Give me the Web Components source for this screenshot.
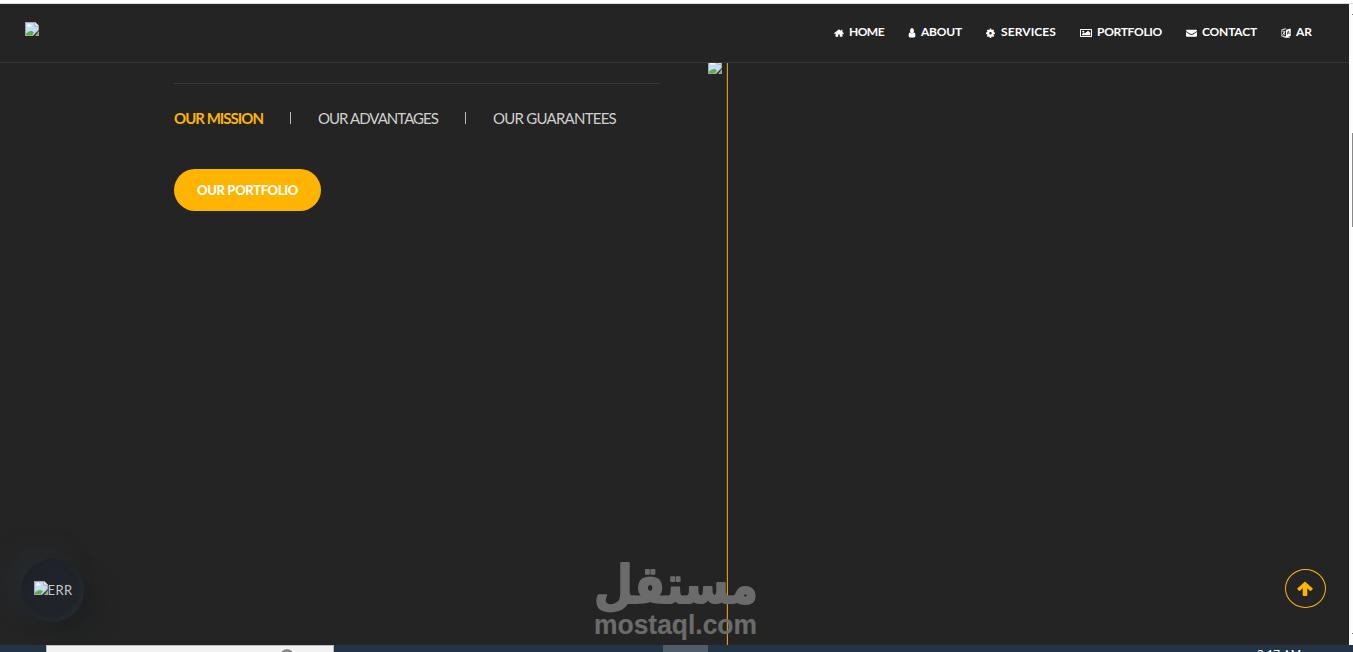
<!DOCTYPE html>
<html lang="en">
<head>
<meta charset="utf-8">
<title>Portfolio</title>
<style>
  html, body { margin: 0; height: 100%; overflow: hidden; background: #fdfdfd; }
</style>
</head>
<body>
<app-shell></app-shell>

<script>
const ICONS = {
  home: '<path d="M8 2.200 0 9l1 1.400 1.500-1V15h4.200v-4h2.600v4h4.200V9.400l1.500 1L16 9l-2.500-2.100V2.800h-2v2.400z"/>',
  user: '<path d="M8 0a4 4.400 0 0 1 4 4.400A4 4.400 0 0 1 8 8.800 4 4.400 0 0 1 4 4.400 4 4.400 0 0 1 8 0z"/><path d="M4.300 7.200C2 7.700 1.200 10 1.200 13q0 3 3 3h7.600q3 0 3-3c0-3-.8-5.300-3.100-5.800C9.500 9.800 6.500 9.800 4.300 7.200z"/>',
  cog: '<path fill-rule="evenodd" d="M6.800 1h2.400l.4 2 1.300.6 1.800-1.100 1.800 1.800-1.100 1.800.6 1.300 2 .4v2.400l-2 .4-.6 1.300 1.100 1.800-1.800 1.800-1.800-1.100-1.300.6-.4 2H6.800l-.4-2-1.300-.6-1.800 1.100-1.800-1.800 1.100-1.800L2 10.600l-2-.4V7.800l2-.4.6-1.300-1.100-1.800 1.800-1.800 1.800 1.100L6.400 3zM8 6.800a2.200 2.200 0 1 0 0 4.400 2.200 2.200 0 0 0 0-4.400z"/>',
  image: '<path fill-rule="evenodd" d="M1.200 2h15.600Q18 2 18 3.200v11.600q0 1.200-1.200 1.200H1.200Q0 16 0 14.800V3.200Q0 2 1.200 2zm.3 1.500v11h15v-11z"/><circle cx="4.800" cy="6.500" r="1.700"/><path d="M3 13v-2l3-3 1.500 1.500L12 5l3.500 3.500V13z"/>',
  mail: '<path d="M0 4.200Q0 3 1.400 3h13.200Q16 3 16 4.200c0 1-1 1.800-1.800 2.400L9.500 9.900q-1.500 1-3 0L1.800 6.600C1 6 0 5.200 0 4.200z"/><path d="M0 7l5.600 4q2.400 1.600 4.800 0L16 7v6.600q0 1.400-1.400 1.400H1.400Q0 15 0 13.600z"/>',
  language: '<path fill-rule="evenodd" d="M8 3 15.500 1v12.500L8 16zM11 5l-1.700 6.300 1-.3.400-1.400 1.800-.6.5 1.100 1-.3L12 4.700zm.5 1.500.7 1.500-1.100.4z"/><path d="M.5 2.500 7.500 0v2L1.500 4.500v8L8 14.200 14 15.500v1L7.500 17 .5 14z" opacity=".8"/><path d="M2 6l5-1v1L5.500 9 7 11l-1 .7-1.400-1.700L2.500 12 2 11l1.800-2L2.700 7.500l1-.4.8 1 .8-1.600L2 7z"/>',
  up: '<path d="M8 .6 16 8.300l-1.900 2.100q-.6.5-1.200 0L10.300 7.800V15q0 1-1 1H6.700q-1 0-1-1V7.800l-2.600 2.600q-.6.5-1.200 0L0 8.300z"/>'
};

// sets letter spacing so that the label takes exactly the given width
class FitLabel extends HTMLElement {
  constructor() {
    super();
    this.attachShadow({ mode: 'open' });
    this.shadowRoot.innerHTML = `
      <style>
        :host { display: block; white-space: nowrap; }
        span { display: inline-block; }
      </style>
      <span><slot></slot></span>
    `;
  }

  connectedCallback() {
    const width = Number(this.getAttribute('width'));
    const span = this.shadowRoot.querySelector('span');
    this.style.width = width + 'px';
    span.style.letterSpacing = '0';
    const count = this.textContent.length;
    const gap = (width - span.getBoundingClientRect().width) / count;
    span.style.letterSpacing = gap + 'px';
  }
}

class UiIcon extends HTMLElement {
  connectedCallback() {
    if (!this.shadowRoot) this.attachShadow({ mode: 'open' });
    const name = this.getAttribute('name');
    const box = name === 'image' ? '0 0 18 18' : '0 0 16 17';
    this.shadowRoot.innerHTML = `
      <style>
        :host { display: block; width: 10px; height: 10px; }
        svg { display: block; width: 100%; height: 100%; fill: currentColor; }
      </style>
      <svg viewBox="${box}" preserveAspectRatio="none">${ICONS[name]}</svg>
    `;
  }
}

class BrokenImage extends HTMLElement {
  constructor() {
    super();
    this.attachShadow({ mode: 'open' });
    this.shadowRoot.innerHTML = `
      <style>
        :host { display: block; width: 14px; height: 14px; flex: none; }
        svg { display: block; }
      </style>
      <svg width="14" height="14" viewBox="0 0 14 14">
        <path d="M0 0h10l4 4v4L8 14H0z" fill="#a5a5a5"/>
        <path d="M1 1h8.500v3.500H13V8l-5 5H1z" fill="#c4daf8"/>
        <path d="M10 0v4h4z" fill="#f2f2f2" stroke="#aaa" stroke-width=".6"/>
        <path d="M2 4.500V3.200h1.200V2H5v1h1.500v1.500z" fill="#fff"/>
        <path d="M1 13v-1.500Q3.500 8.500 7 9l2 1.500L7 13z" fill="#58b043"/>
        <path d="M14 9v5h-4z" fill="#a5a5a5"/>
        <path d="M13 10.500V13h-2z" fill="#58b043"/>
      </svg>
    `;
  }
}

class NavItem extends HTMLElement {
  connectedCallback() {
    if (!this.shadowRoot) this.attachShadow({ mode: 'open' });
    this.shadowRoot.innerHTML = `
      <style>
        :host { display: flex; align-items: center; height: 16px; color: #fff; font-weight: 700; font-size: 12px; line-height: 16px; }
        ui-icon { width: ${this.getAttribute('icon-width')}px; margin: 2px ${this.getAttribute('gap') || 5}px 0 0; }
      </style>
      <ui-icon name="${this.getAttribute('icon')}"></ui-icon>
      <fit-label width="${this.getAttribute('width')}">${this.getAttribute('label')}</fit-label>
    `;
  }
}

class SiteHeader extends HTMLElement {
  constructor() {
    super();
    this.attachShadow({ mode: 'open' });
    this.shadowRoot.innerHTML = `
      <style>
        :host { display: flex; justify-content: space-between; align-items: flex-start; box-sizing: border-box;
          height: 59px; padding: 18px 37px 0 25px; border-bottom: 1px solid #363636; }
        nav { display: flex; gap: 24px; margin-top: 2px; }
      </style>
      <broken-image></broken-image>
      <nav>
        <nav-item icon="home" icon-width="10" label="HOME" width="35"></nav-item>
        <nav-item icon="user" icon-width="8" label="ABOUT" width="41"></nav-item>
        <nav-item icon="cog" icon-width="9" gap="6" label="SERVICES" width="55"></nav-item>
        <nav-item icon="image" icon-width="12" label="PORTFOLIO" width="65"></nav-item>
        <nav-item icon="mail" icon-width="11" label="CONTACT" width="55"></nav-item>
        <nav-item icon="language" icon-width="10" label="AR" width="16"></nav-item>
      </nav>
    `;
  }
}

class MissionPanel extends HTMLElement {
  constructor() {
    super();
    this.attachShadow({ mode: 'open' });
    this.shadowRoot.innerHTML = `
      <style>
        :host { display: block; box-sizing: border-box; width: 660px; padding: 20px 0 0 174px; }
        .tabs { display: flex; align-items: center; border-top: 1px solid #3a3a3a; height: 67px;
          color: #d0d0d0; font-size: 15px; line-height: 20px; }
        .active { color: #ffb400; font-weight: 700; }
        i { width: 1px; height: 12px; background: #bbb; margin: 0 27px; }
        button { display: flex; justify-content: center; align-items: center; width: 147px; height: 42px;
          margin: 18px 0 0; padding: 0 0 1px; border: 0; border-radius: 21px; background: #ffb400;
          color: #fff; font-weight: 900; font-size: 13px; font-family: inherit; }
      </style>
      <div class="tabs">
        <fit-label class="active" width="89">OUR MISSION</fit-label><i></i>
        <fit-label width="120">OUR ADVANTAGES</fit-label><i></i>
        <fit-label width="123">OUR GUARANTEES</fit-label>
      </div>
      <button><fit-label width="101">OUR PORTFOLIO</fit-label></button>
    `;
  }
}

class ChatBubble extends HTMLElement {
  constructor() {
    super();
    this.attachShadow({ mode: 'open' });
    this.shadowRoot.innerHTML = `
      <style>
        :host { display: flex; align-items: center; justify-content: center; width: 63px; height: 63px;
          border-radius: 50%; background: #20242a; color: #c8c8c8; font-size: 13px;
          box-shadow: -13px -10px 22px -2px #262b2f, 17px 14px 20px -2px #1f2122, inset -3px -3px 6px #252b30, inset 3px 3px 6px #1f2228; }
        broken-image { margin: -6px 0 0 1px; }
        fit-label { margin-top: -2px; }
      </style>
      <broken-image></broken-image><fit-label width="25">ERR</fit-label>
    `;
  }
}

class ScrollTop extends HTMLElement {
  constructor() {
    super();
    this.attachShadow({ mode: 'open' });
    this.shadowRoot.innerHTML = `
      <style>
        :host { display: flex; align-items: center; justify-content: center; box-sizing: border-box;
          width: 41px; height: 39px; border: 1px solid #ffb400; border-radius: 50%; color: #ffb400; }
        ui-icon { width: 16px; height: 16px; margin-right: 2px; }
      </style>
      <ui-icon name="up"></ui-icon>
    `;
  }
}

class WaterMark extends HTMLElement {
  constructor() {
    super();
    this.attachShadow({ mode: 'open' });
    this.shadowRoot.innerHTML = `
      <style>
        :host { display: block; width: 164px; height: 78px; }
        svg { display: block; overflow: visible; }
        text { fill: #6b6b6b; stroke: #6b6b6b; stroke-linejoin: round; }
      </style>
      <svg width="164" height="78" viewBox="0 0 164 78">
        <text id="ar" direction="rtl" x="0" y="0" font-family="DejaVu Sans, sans-serif" font-weight="bold" font-size="50" stroke-width="1.800">مستقل</text>
        <text x="0" y="70.500" font-family="Liberation Sans, Arial, sans-serif" font-weight="bold" font-size="27.500"
          stroke-width=".2" textLength="163" lengthAdjust="spacingAndGlyphs">mostaql.com</text>
      </svg>
    `;
  }

  connectedCallback() {
    // stretch the wordmark over the full width of the domain line
    const ar = this.shadowRoot.getElementById('ar');
    const box = ar.getBBox();
    const k = 164 / box.width;
    ar.setAttribute('transform', `translate(${-box.x * k} 40) scale(${k} 1.05)`);
  }
}

class TaskBar extends HTMLElement {
  constructor() {
    super();
    this.attachShadow({ mode: 'open' });
    this.shadowRoot.innerHTML = `
      <style>
        :host { display: flex; height: 7px; overflow: hidden; background: #223446; color: #fff;
          font: 12px/14px "Open Sans", sans-serif; }
        .search { box-sizing: border-box; width: 288px; margin-left: 46px; border: 1px solid #bcbcbc; border-bottom: 0; background: #f2f2f2; }
        .search svg { display: block; margin-left: 233px; margin-top: 3px; }
        .app { width: 45px; margin-left: 329px; background: #505d69; }
        .time { margin: 3px 0 0 549px; }
      </style>
      <div class="search"><svg width="14" height="14"><circle cx="7" cy="7" r="6" fill="#999" stroke="#777" stroke-width="1.500"/></svg></div>
      <div class="app"></div>
      <fit-label class="time" width="44">2:17 AM</fit-label>
    `;
  }
}

class AppShell extends HTMLElement {
  constructor() {
    super();
    this.attachShadow({ mode: 'open' });
    this.shadowRoot.innerHTML = `
      <style>
        :host { display: flex; flex-direction: column; position: relative; width: 1353px; height: 652px; overflow: hidden;
          font-family: Lato, sans-serif; }
        .edge { height: 3px; border-bottom: 1px solid #ddd; background: #fff; }
        .view { display: flex; flex: 1; min-height: 0; }
        .page { display: flex; flex-direction: column; width: 1349px; background: #242424; }
        .content { display: flex; flex: 1; min-height: 0; overflow: hidden; }
        .second { display: flex; margin-left: 48px; }
        .second broken-image { margin: -3px 4px 0 0; }
        .line { box-sizing: border-box; width: 2px; border-left: 1px solid #4a3a18; background: #d69b12; }
        .scroll { display: flex; flex-direction: column; align-items: flex-end; width: 4px; background: #fdfdfd; }
        .scroll i { width: 1px; height: 1px; background: #777; margin-top: 10px; }
        .scroll .thumb { height: 94px; margin-top: 118px; background: #888; }
        .scroll .down { margin-top: 406px; }
        chat-bubble, scroll-top, water-mark { position: absolute; }
        scroll-top { left: 1285px; top: 569px; }
        water-mark { left: 594px; top: 563px; }
        .fade { position: absolute; left: 0; top: 520px; width: 150px; height: 125px; overflow: hidden; }
        .fade chat-bubble { left: 21px; top: 39px; }
      </style>
      <div class="edge"></div>
      <div class="view">
        <div class="page">
          <site-header></site-header>
          <div class="content">
            <mission-panel></mission-panel>
            <div class="second"><broken-image></broken-image><div class="line"></div></div>
          </div>
        </div>
        <div class="scroll"><i></i><i class="thumb"></i><i class="down"></i></div>
      </div>
      <task-bar></task-bar>
      <div class="fade"><chat-bubble></chat-bubble></div>
      <scroll-top></scroll-top>
      <water-mark></water-mark>
    `;
  }
}

customElements.define('fit-label', FitLabel);
customElements.define('ui-icon', UiIcon);
customElements.define('broken-image', BrokenImage);
customElements.define('nav-item', NavItem);
customElements.define('site-header', SiteHeader);
customElements.define('mission-panel', MissionPanel);
customElements.define('chat-bubble', ChatBubble);
customElements.define('scroll-top', ScrollTop);
customElements.define('water-mark', WaterMark);
customElements.define('task-bar', TaskBar);
customElements.define('app-shell', AppShell);
</script>
</body>
</html>
